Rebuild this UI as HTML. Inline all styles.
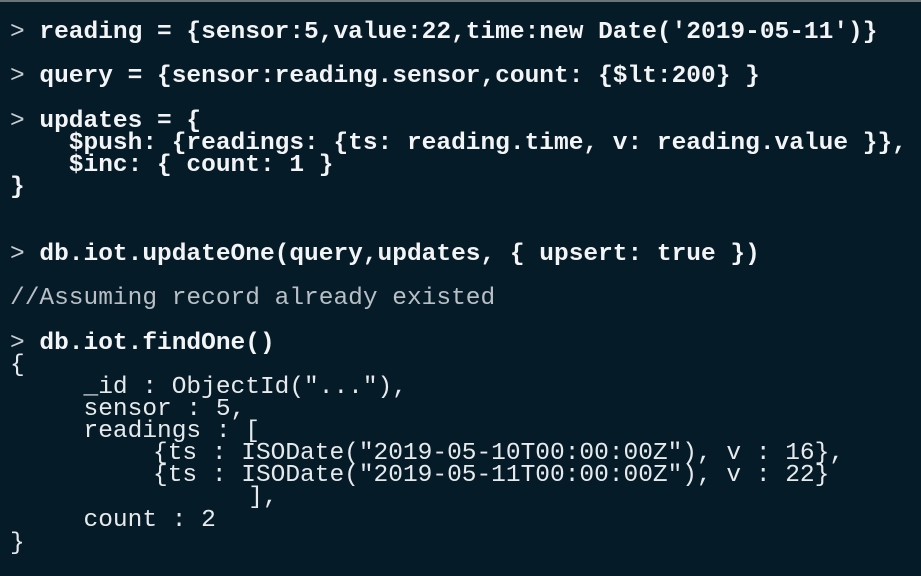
<!DOCTYPE html>
<html><head><meta charset="utf-8"><style>
html,body{margin:0;padding:0;}
body{width:921px;height:576px;background:#061b28;position:relative;overflow:hidden;font-family:"Liberation Mono",monospace;font-size:24.5px;color:#f2f4f5;}
.top{position:absolute;left:0;top:0;width:921px;height:2px;background:#6b7378;}
.l{position:absolute;left:10px;height:24px;line-height:24px;white-space:pre;}
.b{font-weight:bold;}
.p{color:#c8ced2;font-weight:normal;}
.c{color:#b8c0c6;}
.n{font-weight:normal;color:#e6eaec;}
</style></head><body>
<div class="top"></div>
<div class="l b" style="top:21px"><span class="p">&gt; </span>reading = {sensor:5,value:22,time:new Date('2019-05-11')}</div>
<div class="l b" style="top:65px"><span class="p">&gt; </span>query = {sensor:reading.sensor,count: {$lt:200} }</div>
<div class="l b" style="top:110px"><span class="p">&gt; </span>updates = {</div>
<div class="l b" style="top:132px">    $push: {readings: {ts: reading.time, v: reading.value }},</div>
<div class="l b" style="top:154px">    $inc: { count: 1 }</div>
<div class="l b" style="top:176px">}</div>
<div class="l b" style="top:243px"><span class="p">&gt; </span>db.iot.updateOne(query,updates, { upsert: true })</div>
<div class="l c" style="top:287px">//Assuming record already existed</div>
<div class="l b" style="top:332px"><span class="p">&gt; </span>db.iot.findOne()</div>
<div class="l n" style="top:354px">{</div>
<div class="l n" style="top:376px">     _id : ObjectId("..."),</div>
<div class="l n" style="top:398px">     sensor : 5,</div>
<div class="l n" style="top:420px">     readings : [</div>
<div class="l n" style="top:442px;left:6px">          {ts : ISODate("2019-05-10T00:00:00Z"), v : 16},</div>
<div class="l n" style="top:464px;left:6px">          {ts : ISODate("2019-05-11T00:00:00Z"), v : 22}</div>
<div class="l n" style="top:486px;left:13px">                ],</div>
<div class="l n" style="top:509px">     count : 2</div>
<div class="l n" style="top:532px">}</div>
</body></html>
